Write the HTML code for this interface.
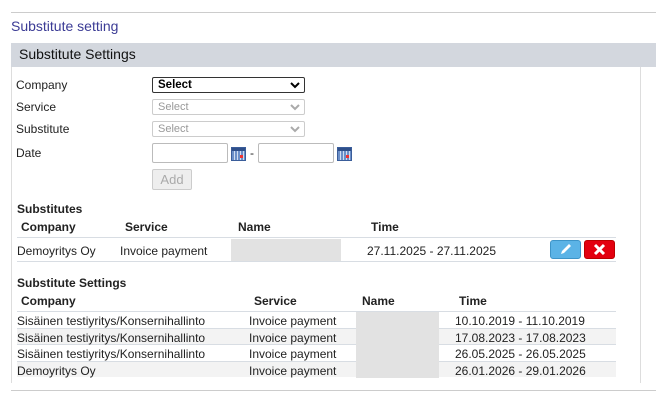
<!DOCTYPE html>
<html><head><meta charset="utf-8"><style>
*{margin:0;padding:0;box-sizing:border-box}
body{width:656px;height:401px;background:#fff;font-family:"Liberation Sans",Arial,sans-serif;font-size:12px;color:#222;position:relative;overflow:hidden}
.a{position:absolute;white-space:nowrap}
.sel{position:absolute;height:16px;border:1px solid #ccc;border-radius:2px;background:#fff;font-size:11px;color:#999;padding-left:5px;line-height:14px}
.sel svg{position:absolute;right:4px;top:4px}
.inp{position:absolute;width:76px;height:20px;border:1px solid #bbb;border-radius:2px;background:#fff}
.cal{position:absolute;width:15px;height:14px;background:repeating-linear-gradient(90deg,#6b8fc8 0 2px,#cfdcf0 2px 3px);border:1px solid #3a5d9a}
.cal:after{content:"";position:absolute;left:8px;top:7px;width:3px;height:3px;background:#e33}
.cal:before{content:"";position:absolute;left:0;top:0;right:0;height:3px;background:#2f4f8a}
.b{font-weight:bold}
.rowbg{position:absolute;left:17px;width:599px;height:16px}
.hl{position:absolute;left:17px;width:599px;height:1px;background:#d8dde3}
</style></head><body>
<div class="a" style="left:11px;top:12px;width:645px;height:1px;background:#ccc"></div>
<div class="a" style="left:11px;top:18px;font-size:14px;color:#3b3b95">Substitute setting</div>
<div class="a" style="left:11px;top:43px;width:645px;height:24px;background:#d3d7de"></div>
<div class="a" style="left:19px;top:46px;font-size:14px;color:#111">Substitute Settings</div>
<div class="a" style="left:11px;top:67px;width:1px;height:316px;background:#ddd"></div>
<div class="a" style="left:640px;top:67px;width:1px;height:316px;background:#ddd"></div>
<div class="a" style="left:11px;top:390px;width:645px;height:1px;background:#ccc"></div>

<div class="a" style="left:16px;top:78px">Company</div>
<div class="a" style="left:16px;top:100px">Service</div>
<div class="a" style="left:16px;top:122px">Substitute</div>
<div class="a" style="left:16px;top:146px">Date</div>

<div class="sel" style="left:152px;top:77px;width:153px;border:1px solid #333;color:#000;font-size:11.5px;font-weight:bold">Select<svg width="10" height="7" viewBox="0 0 10 7"><path d="M1 1l4 4 4-4" stroke="#000" stroke-width="2" fill="none"/></svg></div>
<div class="sel" style="left:152px;top:99px;width:153px">Select<svg width="10" height="7" viewBox="0 0 10 7"><path d="M1 1l4 4 4-4" stroke="#aaa" stroke-width="2" fill="none"/></svg></div>
<div class="sel" style="left:152px;top:121px;width:153px">Select<svg width="10" height="7" viewBox="0 0 10 7"><path d="M1 1l4 4 4-4" stroke="#aaa" stroke-width="2" fill="none"/></svg></div>
<div class="inp" style="left:152px;top:143px"></div>
<div class="cal" style="left:231px;top:147px"></div>
<div class="a" style="left:250px;top:146px">-</div>
<div class="inp" style="left:258px;top:143px"></div>
<div class="cal" style="left:337px;top:147px"></div>
<div class="a" style="left:152px;top:169px;width:40px;height:21px;border:1px solid #ccc;border-radius:2px;background:#eee;color:#aaa;font-size:13px;text-align:center;line-height:19px">Add</div>

<div class="a b" style="left:17px;top:202px">Substitutes</div>
<div class="a b" style="left:21px;top:220px">Company</div>
<div class="a b" style="left:125px;top:220px">Service</div>
<div class="a b" style="left:238px;top:220px">Name</div>
<div class="a b" style="left:371px;top:220px">Time</div>
<div class="hl" style="top:237px"></div>
<div class="a" style="left:231px;top:239px;width:110px;height:22px;background:#e2e2e2"></div>
<div class="a" style="left:17px;top:244px">Demoyritys Oy</div>
<div class="a" style="left:120px;top:244px">Invoice payment</div>
<div class="a" style="left:367px;top:244px">27.11.2025 - 27.11.2025</div>
<div class="a" style="left:550px;top:240px;width:31px;height:19px;background:#5bb3e6;border:1px solid #3d94c8;border-radius:3px"><svg width="29" height="17" viewBox="0 0 29 17"><path d="M10 13l1-3 7-7 2 2-7 7z" fill="#fff"/></svg></div>
<div class="a" style="left:584px;top:240px;width:31px;height:19px;background:#e3000f;border:1px solid #b00;border-radius:3px"><svg width="29" height="17" viewBox="0 0 29 17"><path d="M10 4l9 9M19 4l-9 9" stroke="#fff" stroke-width="3"/></svg></div>
<div class="hl" style="top:261px"></div>

<div class="a b" style="left:17px;top:276px">Substitute Settings</div>
<div class="a b" style="left:21px;top:294px">Company</div>
<div class="a b" style="left:254px;top:294px">Service</div>
<div class="a b" style="left:362px;top:294px">Name</div>
<div class="a b" style="left:459px;top:294px">Time</div>
<div class="hl" style="top:311px"></div>
<div class="rowbg" style="top:328px;background:#f3f3f3"></div>
<div class="rowbg" style="top:361px;background:#f3f3f3"></div>
<div class="hl" style="top:328px"></div>
<div class="hl" style="top:344px"></div>
<div class="hl" style="top:361px"></div>
<div class="a" style="left:356px;top:312px;width:83px;height:66px;background:#e2e2e2"></div>
<div class="a" style="left:17px;top:314px">Sisäinen testiyritys/Konsernihallinto</div>
<div class="a" style="left:249px;top:314px">Invoice payment</div>
<div class="a" style="left:455px;top:314px">10.10.2019 - 11.10.2019</div>
<div class="a" style="left:17px;top:331px">Sisäinen testiyritys/Konsernihallinto</div>
<div class="a" style="left:249px;top:331px">Invoice payment</div>
<div class="a" style="left:455px;top:331px">17.08.2023 - 17.08.2023</div>
<div class="a" style="left:17px;top:347px">Sisäinen testiyritys/Konsernihallinto</div>
<div class="a" style="left:249px;top:347px">Invoice payment</div>
<div class="a" style="left:455px;top:347px">26.05.2025 - 26.05.2025</div>
<div class="a" style="left:17px;top:364px">Demoyritys Oy</div>
<div class="a" style="left:249px;top:364px">Invoice payment</div>
<div class="a" style="left:455px;top:364px">26.01.2026 - 29.01.2026</div>
</body></html>
